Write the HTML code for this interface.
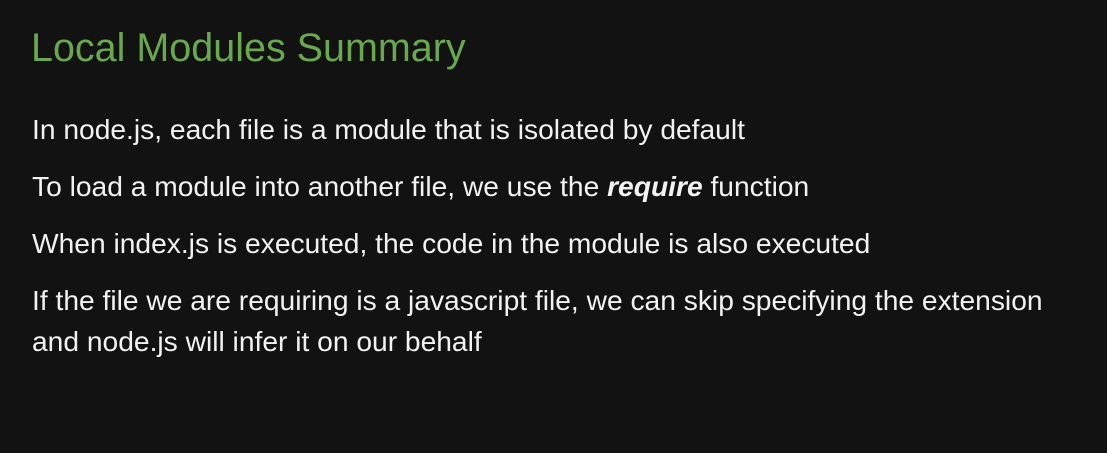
<!DOCTYPE html>
<html><head><style>
body{margin:0;width:1107px;height:453px;background:#121212;overflow:hidden;font-family:"Liberation Sans",Arial,sans-serif;}
.t{position:absolute;left:31px;top:24px;font-size:39.5px;color:#6aa84f;line-height:48px;white-space:nowrap}
.p{position:absolute;left:32px;font-size:28.2px;color:#f2f2f2;line-height:41px;white-space:nowrap}
</style></head><body>
<div class="t">Local Modules Summary</div>
<div class="p" style="top:109px">In node.js, each file is a module that is isolated by default</div>
<div class="p" style="top:166px">To load a module into another file, we use the <b><i>require</i></b> function</div>
<div class="p" style="top:223px">When index.js is executed, the code in the module is also executed</div>
<div class="p" style="top:280px">If the file we are requiring is a javascript file, we can skip specifying the extension<br>and node.js will infer it on our behalf</div>
</body></html>
